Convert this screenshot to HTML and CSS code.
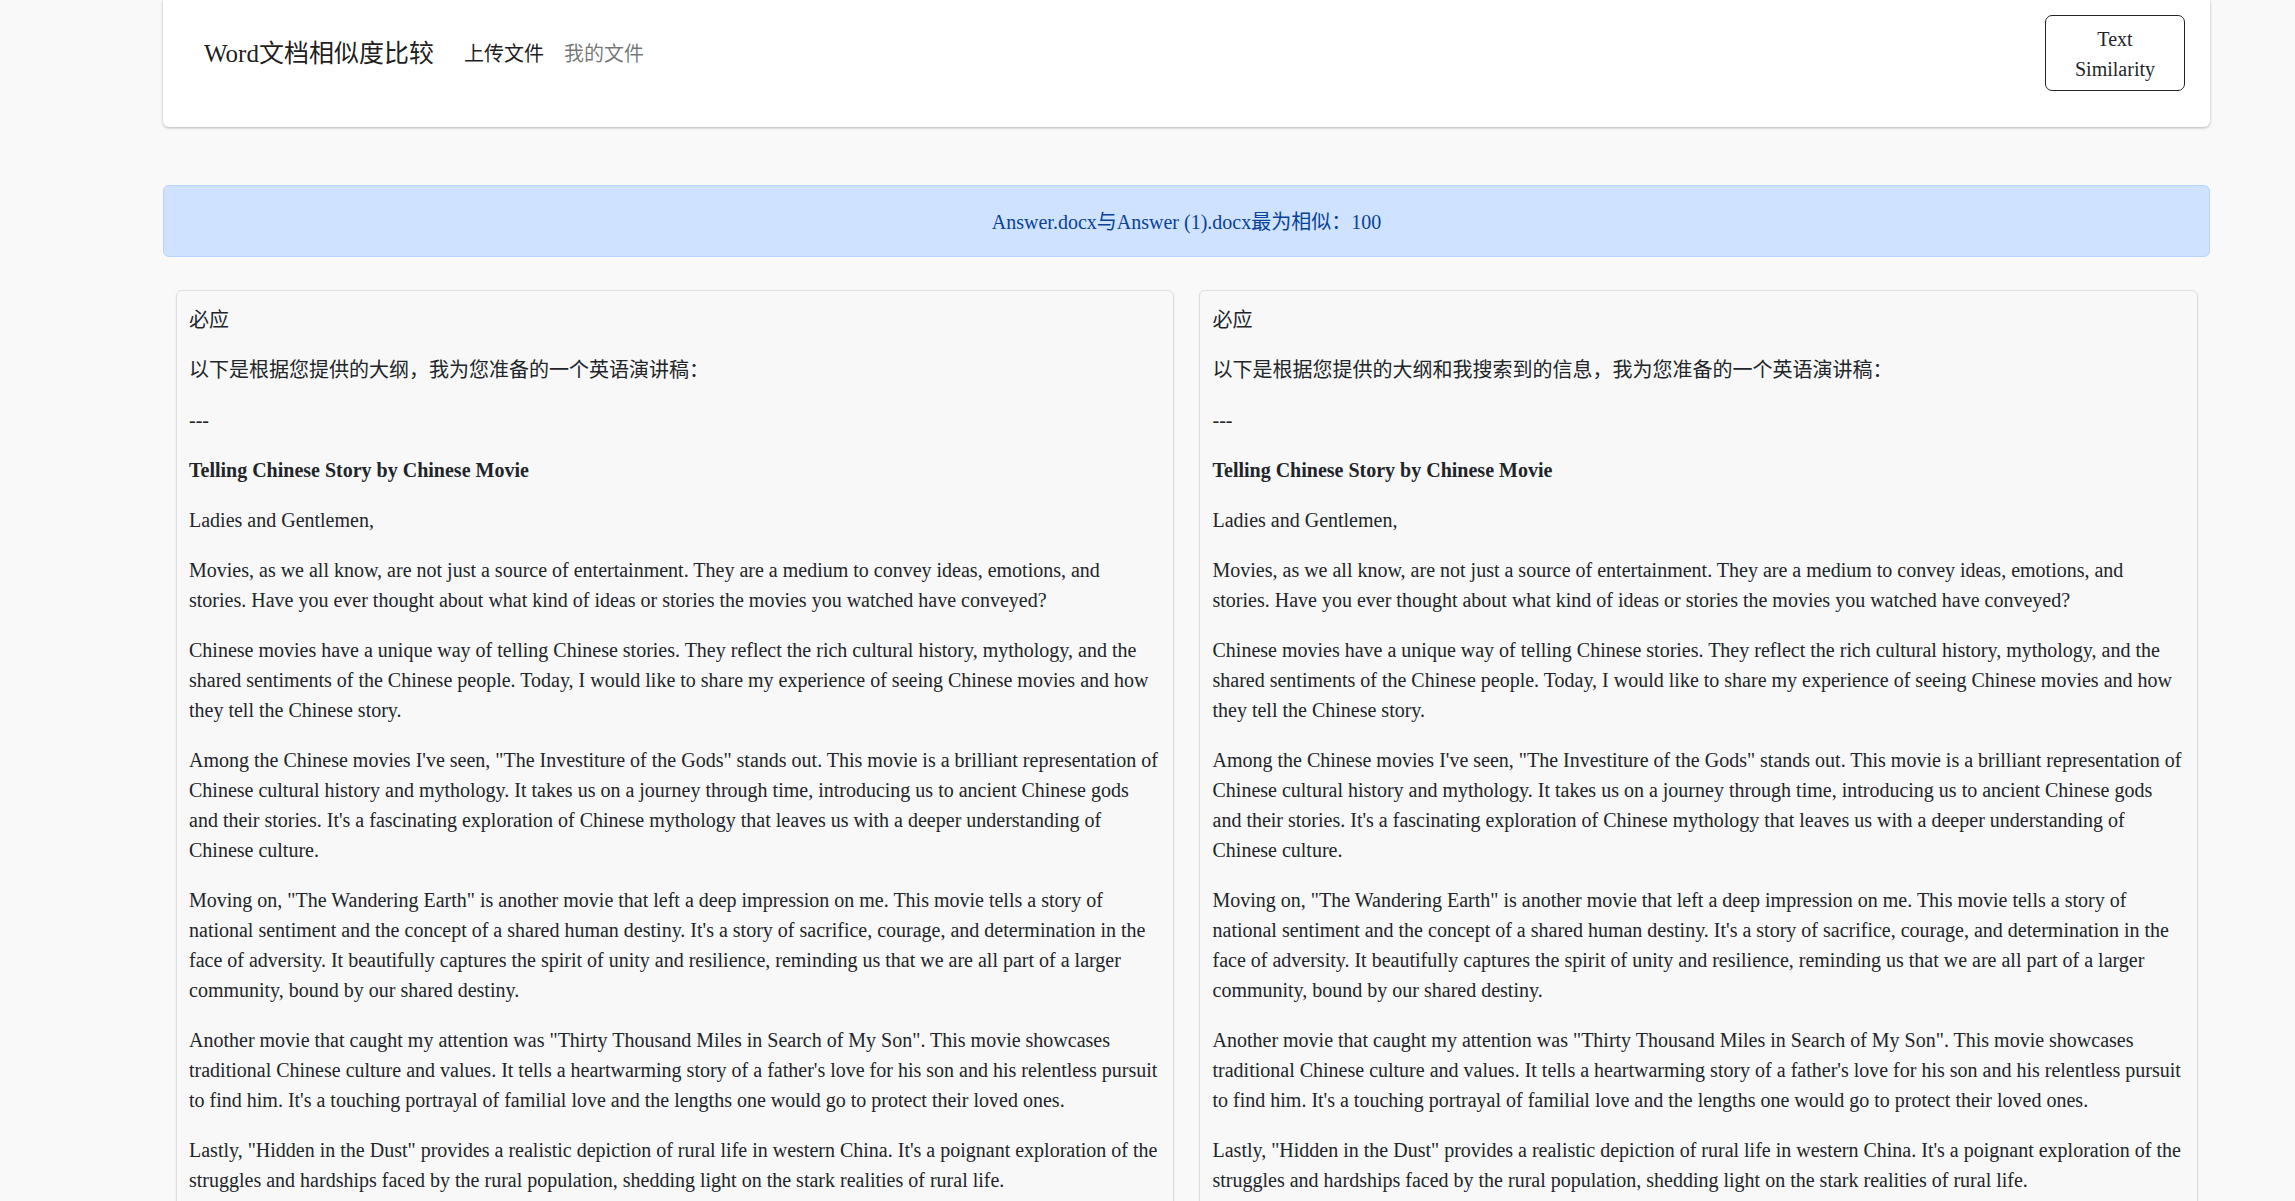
FILE: index.html
```html
<!DOCTYPE html>
<html lang="zh-CN">
<head>
<meta charset="utf-8">
<title>Word文档相似度比较</title>
<link rel="stylesheet" href="styles.css">
</head>
<body>
<div class="page">
  <nav class="topbar">
    <div class="nav-left">
      <span class="brand">Word文档相似度比较</span>
      <a class="nav-link active" href="#">上传文件</a>
      <a class="nav-link" href="#">我的文件</a>
    </div>
    <button class="btn-outline" type="button">Text Similarity</button>
  </nav>

  <div class="alert">Answer.docx与Answer (1).docx最为相似：100</div>

  <div class="docs">
    <div class="doc-col">
      <div class="doc-card">
        <p>必应</p>
        <p>以下是根据您提供的大纲，我为您准备的一个英语演讲稿：</p>
        <p>---</p>
        <p><strong>Telling Chinese Story by Chinese Movie</strong></p>
        <p>Ladies and Gentlemen,</p>
        <p>Movies, as we all know, are not just a source of entertainment. They are a medium to convey ideas, emotions, and stories. Have you ever thought about what kind of ideas or stories the movies you watched have conveyed?</p>
        <p>Chinese movies have a unique way of telling Chinese stories. They reflect the rich cultural history, mythology, and the shared sentiments of the Chinese people. Today, I would like to share my experience of seeing Chinese movies and how they tell the Chinese story.</p>
        <p>Among the Chinese movies I've seen, "The Investiture of the Gods" stands out. This movie is a brilliant representation of Chinese cultural history and mythology. It takes us on a journey through time, introducing us to ancient Chinese gods and their stories. It's a fascinating exploration of Chinese mythology that leaves us with a deeper understanding of Chinese culture.</p>
        <p>Moving on, "The Wandering Earth" is another movie that left a deep impression on me. This movie tells a story of national sentiment and the concept of a shared human destiny. It's a story of sacrifice, courage, and determination in the face of adversity. It beautifully captures the spirit of unity and resilience, reminding us that we are all part of a larger community, bound by our shared destiny.</p>
        <p>Another movie that caught my attention was "Thirty Thousand Miles in Search of My Son". This movie showcases traditional Chinese culture and values. It tells a heartwarming story of a father's love for his son and his relentless pursuit to find him. It's a touching portrayal of familial love and the lengths one would go to protect their loved ones.</p>
        <p>Lastly, "Hidden in the Dust" provides a realistic depiction of rural life in western China. It's a poignant exploration of the struggles and hardships faced by the rural population, shedding light on the stark realities of rural life.</p>
      </div>
    </div>
    <div class="doc-col">
      <div class="doc-card">
        <p>必应</p>
        <p>以下是根据您提供的大纲和我搜索到的信息，我为您准备的一个英语演讲稿：</p>
        <p>---</p>
        <p><strong>Telling Chinese Story by Chinese Movie</strong></p>
        <p>Ladies and Gentlemen,</p>
        <p>Movies, as we all know, are not just a source of entertainment. They are a medium to convey ideas, emotions, and stories. Have you ever thought about what kind of ideas or stories the movies you watched have conveyed?</p>
        <p>Chinese movies have a unique way of telling Chinese stories. They reflect the rich cultural history, mythology, and the shared sentiments of the Chinese people. Today, I would like to share my experience of seeing Chinese movies and how they tell the Chinese story.</p>
        <p>Among the Chinese movies I've seen, "The Investiture of the Gods" stands out. This movie is a brilliant representation of Chinese cultural history and mythology. It takes us on a journey through time, introducing us to ancient Chinese gods and their stories. It's a fascinating exploration of Chinese mythology that leaves us with a deeper understanding of Chinese culture.</p>
        <p>Moving on, "The Wandering Earth" is another movie that left a deep impression on me. This movie tells a story of national sentiment and the concept of a shared human destiny. It's a story of sacrifice, courage, and determination in the face of adversity. It beautifully captures the spirit of unity and resilience, reminding us that we are all part of a larger community, bound by our shared destiny.</p>
        <p>Another movie that caught my attention was "Thirty Thousand Miles in Search of My Son". This movie showcases traditional Chinese culture and values. It tells a heartwarming story of a father's love for his son and his relentless pursuit to find him. It's a touching portrayal of familial love and the lengths one would go to protect their loved ones.</p>
        <p>Lastly, "Hidden in the Dust" provides a realistic depiction of rural life in western China. It's a poignant exploration of the struggles and hardships faced by the rural population, shedding light on the stark realities of rural life.</p>
      </div>
    </div>
  </div>
</div>
</body>
</html>
```

FILE: styles.css
```css
* { box-sizing: border-box; }

html, body {
  margin: 0;
  padding: 0;
}

body {
  background: #f9f9f9;
  color: #212529;
  font-family: "Liberation Serif", "Noto Sans CJK SC", serif;
  font-size: 20px;
  line-height: 1.5;
}

.page {
  width: 2047px;
  margin-left: 163px;
}

.topbar {
  height: 127px;
  background: #ffffff;
  border-radius: 0 0 6px 6px;
  box-shadow: 0 1px 3px rgba(0, 0, 0, 0.28);
  display: flex;
  align-items: flex-start;
  justify-content: space-between;
  padding: 15px 25px 0 41px;
}

.nav-left {
  display: flex;
  align-items: center;
  height: 76px;
  padding-top: 2px;
}

.brand {
  font-size: 25px;
  line-height: 37.5px;
  color: rgba(0, 0, 0, 0.9);
  margin-right: 20px;
}

.nav-link {
  padding: 0 10px;
  font-size: 20px;
  line-height: 30px;
  color: rgba(0, 0, 0, 0.55);
  text-decoration: none;
}

.nav-link.active {
  color: rgba(0, 0, 0, 0.9);
}

.btn-outline {
  width: 140px;
  height: 76px;
  padding: 7.5px 15px;
  background: transparent;
  border: 1px solid #212529;
  border-radius: 7px;
  color: #212529;
  font-family: "Liberation Serif", "Noto Sans CJK SC", serif;
  font-size: 20px;
  line-height: 30px;
  text-align: center;
}

.alert {
  margin-top: 58px;
  margin-bottom: 20px;
  padding: 21px 20px 19px;
  background: #cfe2ff;
  border: 1px solid #b6d4fe;
  border-radius: 6px;
  color: #084298;
  text-align: center;
}

.docs {
  display: grid;
  grid-template-columns: 1fr 1fr;
}

.doc-col {
  padding: 12.5px;
  min-width: 0;
}

.doc-card {
  background: #f8f8f8;
  border: 1px solid #dedede;
  border-radius: 6px;
  box-shadow: 0 1px 3px rgba(0, 0, 0, 0.08);
  padding: 14px 12.5px 12.5px;
}

.doc-card p {
  margin: 0 0 20px;
}

.doc-card strong {
  font-weight: bold;
}
```
